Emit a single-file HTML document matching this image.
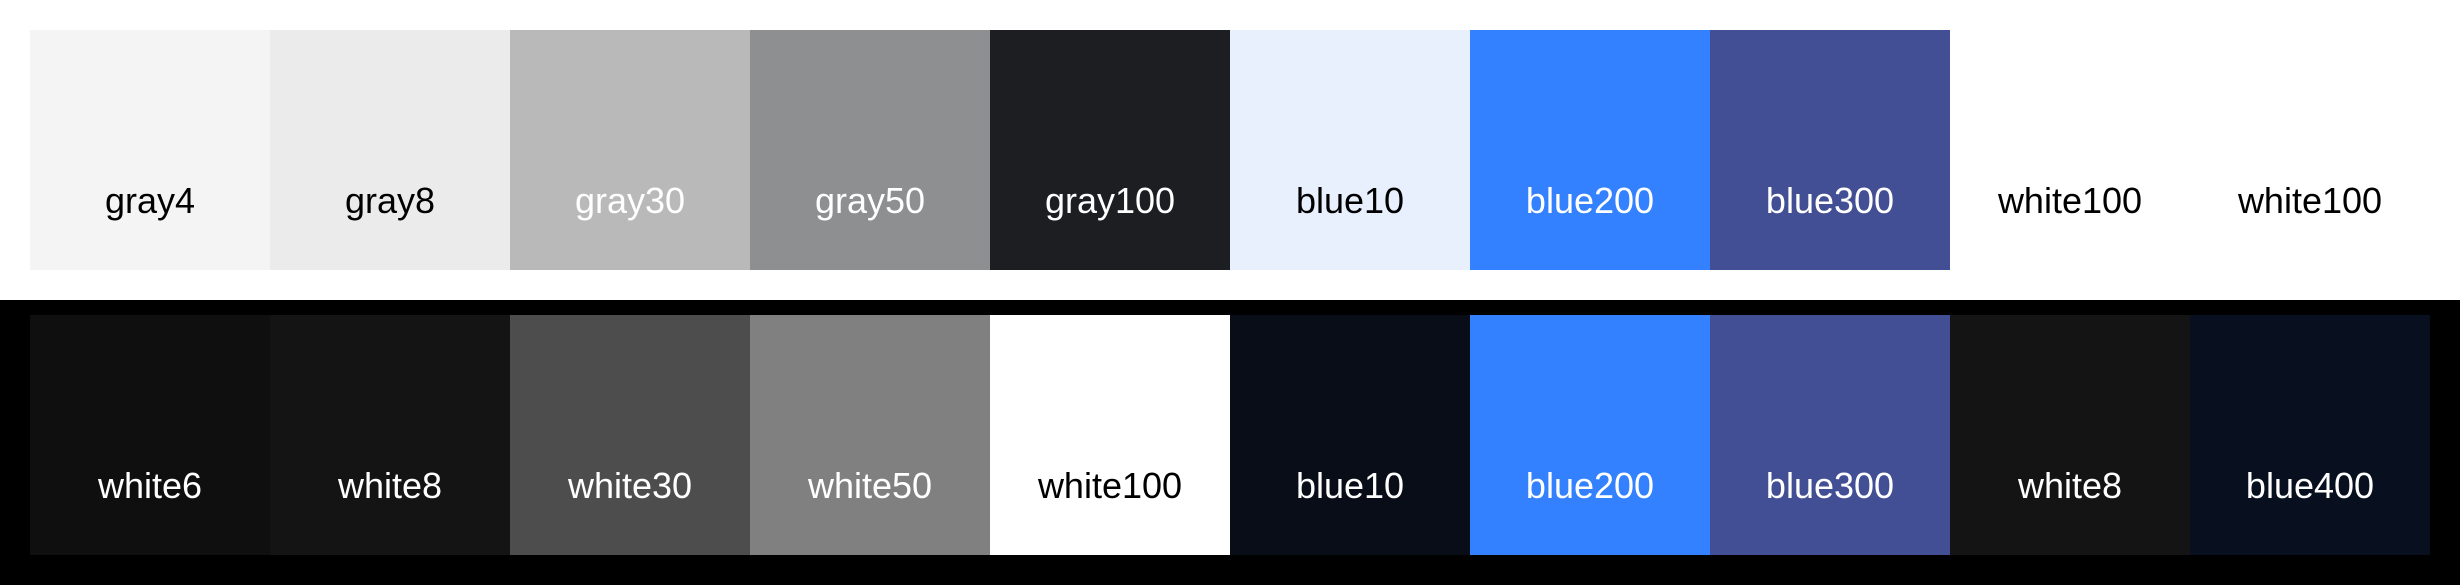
<!DOCTYPE html>
<html><head><style>
body{margin:0;width:2460px;height:585px;background:#fff;position:relative;overflow:hidden;font-family:"Liberation Sans",sans-serif}
.row{position:absolute;left:30px;display:flex}
.s{width:240px;height:240px;position:relative}
.s span{position:absolute;left:0;right:0;top:171px;transform:translateY(-50%);text-align:center;font-size:36px;line-height:1}
.band{position:absolute;left:0;top:300px;width:2460px;height:285px;background:#000}
.d{color:#000}.l{color:#fff}
</style></head><body>
<div class="row" style="top:30px">
<div class="s d" style="background:#f4f4f4"><span>gray4</span></div>
<div class="s d" style="background:#ebebeb"><span>gray8</span></div>
<div class="s l" style="background:#b9b9ba"><span>gray30</span></div>
<div class="s l" style="background:#8e8f91"><span>gray50</span></div>
<div class="s l" style="background:#1d1e22"><span>gray100</span></div>
<div class="s d" style="background:#e8f0fe"><span>blue10</span></div>
<div class="s l" style="background:#3381ff"><span>blue200</span></div>
<div class="s l" style="background:#434f94"><span>blue300</span></div>
<div class="s d" style="background:#fff"><span>white100</span></div>
<div class="s d" style="background:#fff"><span>white100</span></div>
</div>
<div class="band"></div>
<div class="row" style="top:315px">
<div class="s l" style="background:#0f0f0f"><span>white6</span></div>
<div class="s l" style="background:#141414"><span>white8</span></div>
<div class="s l" style="background:#4d4d4d"><span>white30</span></div>
<div class="s l" style="background:#808080"><span>white50</span></div>
<div class="s d" style="background:#fff"><span>white100</span></div>
<div class="s l" style="background:#080d17"><span>blue10</span></div>
<div class="s l" style="background:#3381ff"><span>blue200</span></div>
<div class="s l" style="background:#434f94"><span>blue300</span></div>
<div class="s l" style="background:#141414"><span>white8</span></div>
<div class="s l" style="background:#08101f"><span>blue400</span></div>
</div>
</body></html>
